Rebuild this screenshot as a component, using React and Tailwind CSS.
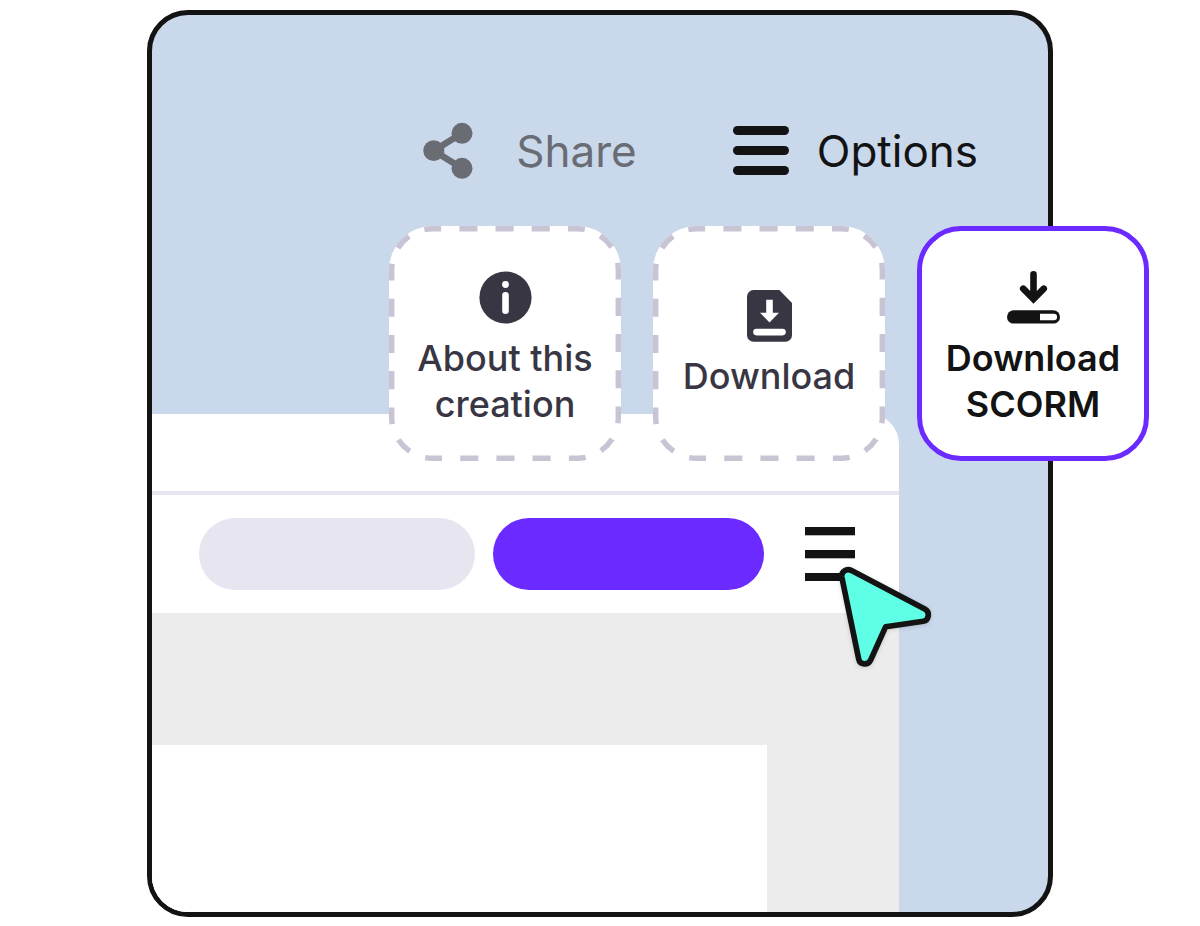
function ShareIcon() {
  return (
    <svg width="50" height="58" viewBox="0 0 50 58" fill="currentColor" aria-hidden="true">
      <path d="M39 11.3 L10.7 28.7 L39 46.3" fill="none" stroke="currentColor" strokeWidth="6.6" />
      <path d="M16 24 H21.2 V33.4 H16Z" />
      <circle cx="10.7" cy="28.7" r="10.4" />
      <circle cx="39" cy="11.3" r="10.5" />
      <circle cx="39" cy="46.3" r="10.5" />
    </svg>
  );
}

function OptionsIcon() {
  return (
    <svg width="56" height="50" viewBox="0 0 56 50" fill="currentColor" aria-hidden="true">
      <rect y="0" width="56" height="9" rx="4.5" />
      <rect y="20" width="56" height="9" rx="4.5" />
      <rect y="40" width="56" height="9" rx="4.5" />
    </svg>
  );
}

function InfoIcon() {
  return (
    <svg width="53" height="53" viewBox="0 0 53 53" aria-hidden="true">
      <circle cx="26.5" cy="26.5" r="26.1" fill="#393644" />
      <circle cx="26.5" cy="13.5" r="3.4" fill="#fff" />
      <rect x="23.2" y="21" width="6.6" height="22" rx="3.3" fill="#fff" />
    </svg>
  );
}

function FileDownloadIcon() {
  return (
    <svg width="45" height="52" viewBox="0 0 45 52" aria-hidden="true">
      <path d="M6.5 0 H32.3 L45 12.9 V45.2 A6.5 6.5 0 0 1 38.5 51.7 H6.5 A6.5 6.5 0 0 1 0 45.2 V6.5 A6.5 6.5 0 0 1 6.5 0Z" fill="#393644" />
      <path d="M19.2 9.8 H25.8 V22.8 H32 L22.5 32.4 L13 22.8 H19.2Z" fill="#fff" />
      <rect x="6.2" y="38.8" width="32.6" height="6.6" rx="3.3" fill="#fff" />
    </svg>
  );
}

function ScormIcon() {
  return (
    <svg width="53" height="53" viewBox="0 0 53 53" aria-hidden="true">
      <path d="M26.5 3.4 V27 M16.2 17.7 L26.5 28 L36.8 17.7" fill="none" stroke="#131313" strokeWidth="6.6" strokeLinecap="round" />
      <rect y="39.3" width="53" height="13.3" rx="6.6" fill="#131313" />
      <path d="M33 42.7 H46.8 A3.3 3.3 0 0 1 46.8 49.3 H33Z" fill="#fff" />
    </svg>
  );
}

function MenuIcon() {
  return (
    <svg width="50" height="54" viewBox="0 0 50 54" fill="currentColor" aria-hidden="true">
      <rect y="0" width="50" height="8.3" />
      <rect y="23" width="50" height="8.3" />
      <rect y="46" width="50" height="8" />
    </svg>
  );
}

function Cursor() {
  return (
    <svg
      className="absolute top-[35px] left-[30px] max-w-none drop-shadow-sm"
      width="102"
      height="112"
      viewBox="0 0 102 112"
      aria-hidden="true"
    >
      <path
        d="M16.5 8.6 L90.2 47.2 C95 49.8 94 58.5 88.3 59.3 L50.7 64.7 L35.5 98.3 C33 103.5 25 103 23.8 97.5 L6.8 15 C6 9.6 11.5 6 16.5 8.6Z"
        fill="#5effe4"
        stroke="#131313"
        strokeWidth="5.7"
        strokeLinejoin="round"
      />
    </svg>
  );
}

// Dash pattern repeats once per side, so every corner gets a single dash
function DashedOutline() {
  return (
    <svg className="absolute inset-0 size-full" viewBox="0 0 232 235" fill="none" aria-hidden="true">
      <rect
        x="2.7"
        y="2.7"
        width="226.6"
        height="229.6"
        rx="41"
        stroke="#c8c4d4"
        strokeWidth="5.4"
        pathLength="852"
        strokeDasharray="17 18.5 18.3 18.3 18.3 18.3 18.3 18.5 17 17 16.5 17"
        strokeDashoffset="8.5"
      />
    </svg>
  );
}

const cards = [
  {
    lines: ['About this', 'creation'],
    icon: <InfoIcon />,
    dashed: true,
    className: 'pt-[45px] font-medium text-[#393644]',
  },
  {
    lines: ['Download'],
    icon: <FileDownloadIcon />,
    dashed: true,
    className: 'pt-[64px] font-medium text-[#393644]',
  },
  {
    lines: ['Download', 'SCORM'],
    icon: <ScormIcon />,
    dashed: false,
    className: 'border-[5px] border-[#6b2aff] pt-[40px] font-semibold text-[#131313]',
  },
];

export default function App() {
  return (
    <main className="bg-white px-[147px] py-[10px] font-['Inter',sans-serif]">
      <div className="grid min-h-[907px]">
        {/* Editor window behind the menu */}
        <section className="col-start-1 row-start-1 flex overflow-hidden rounded-[41px] border-[5px] border-[#131313] bg-[#c9d8eb] pt-[399px] pr-[149px]">
          <div className="flex flex-1 flex-col rounded-tr-[30px] bg-white">
            <div className="h-[81px] border-b-4 border-[#e7e5f0]" />
            <div className="flex h-[118px] items-center justify-end pr-[44px]">
              <button type="button" aria-label="Preview" className="h-[72px] w-[276px] rounded-full bg-[#e7e5f0]" />
              <button type="button" aria-label="Publish" className="ml-[18px] h-[72px] w-[271px] rounded-full bg-[#6b2aff]" />
              <button type="button" aria-label="Menu" className="relative ml-[41px] text-[#131313]">
                <MenuIcon />
                <Cursor />
              </button>
            </div>
            <div className="flex flex-1 bg-[#ececec] pt-[132px] pr-[132px]">
              <div className="flex-1 bg-white" />
            </div>
          </div>
        </section>

        {/* Options menu */}
        <div className="pointer-events-none z-10 col-start-1 row-start-1">
          <nav className="flex items-center justify-end pt-[112px] pr-[75px] text-[44px] leading-[58px]">
            <button type="button" className="pointer-events-auto flex items-center gap-[43px] text-[#6a6c73]">
              <ShareIcon />
              Share
            </button>
            <button type="button" className="pointer-events-auto ml-[96px] flex items-center gap-[28px] text-[#131313]">
              <OptionsIcon />
              Options
            </button>
          </nav>
          <div className="mt-[46px] -mr-[96px] flex justify-end gap-8">
            {cards.map((card) => (
              <button
                key={card.lines.join(' ')}
                type="button"
                className={`pointer-events-auto relative flex h-[235px] w-[232px] flex-col items-center gap-[11px] rounded-[44px] bg-white text-[36px] leading-[46px] ${card.className}`}
              >
                {card.dashed && <DashedOutline />}
                {card.icon}
                <span>
                  {card.lines.map((line) => (
                    <span key={line} className="block whitespace-nowrap">
                      {line}
                    </span>
                  ))}
                </span>
              </button>
            ))}
          </div>
        </div>
      </div>
    </main>
  );
}
